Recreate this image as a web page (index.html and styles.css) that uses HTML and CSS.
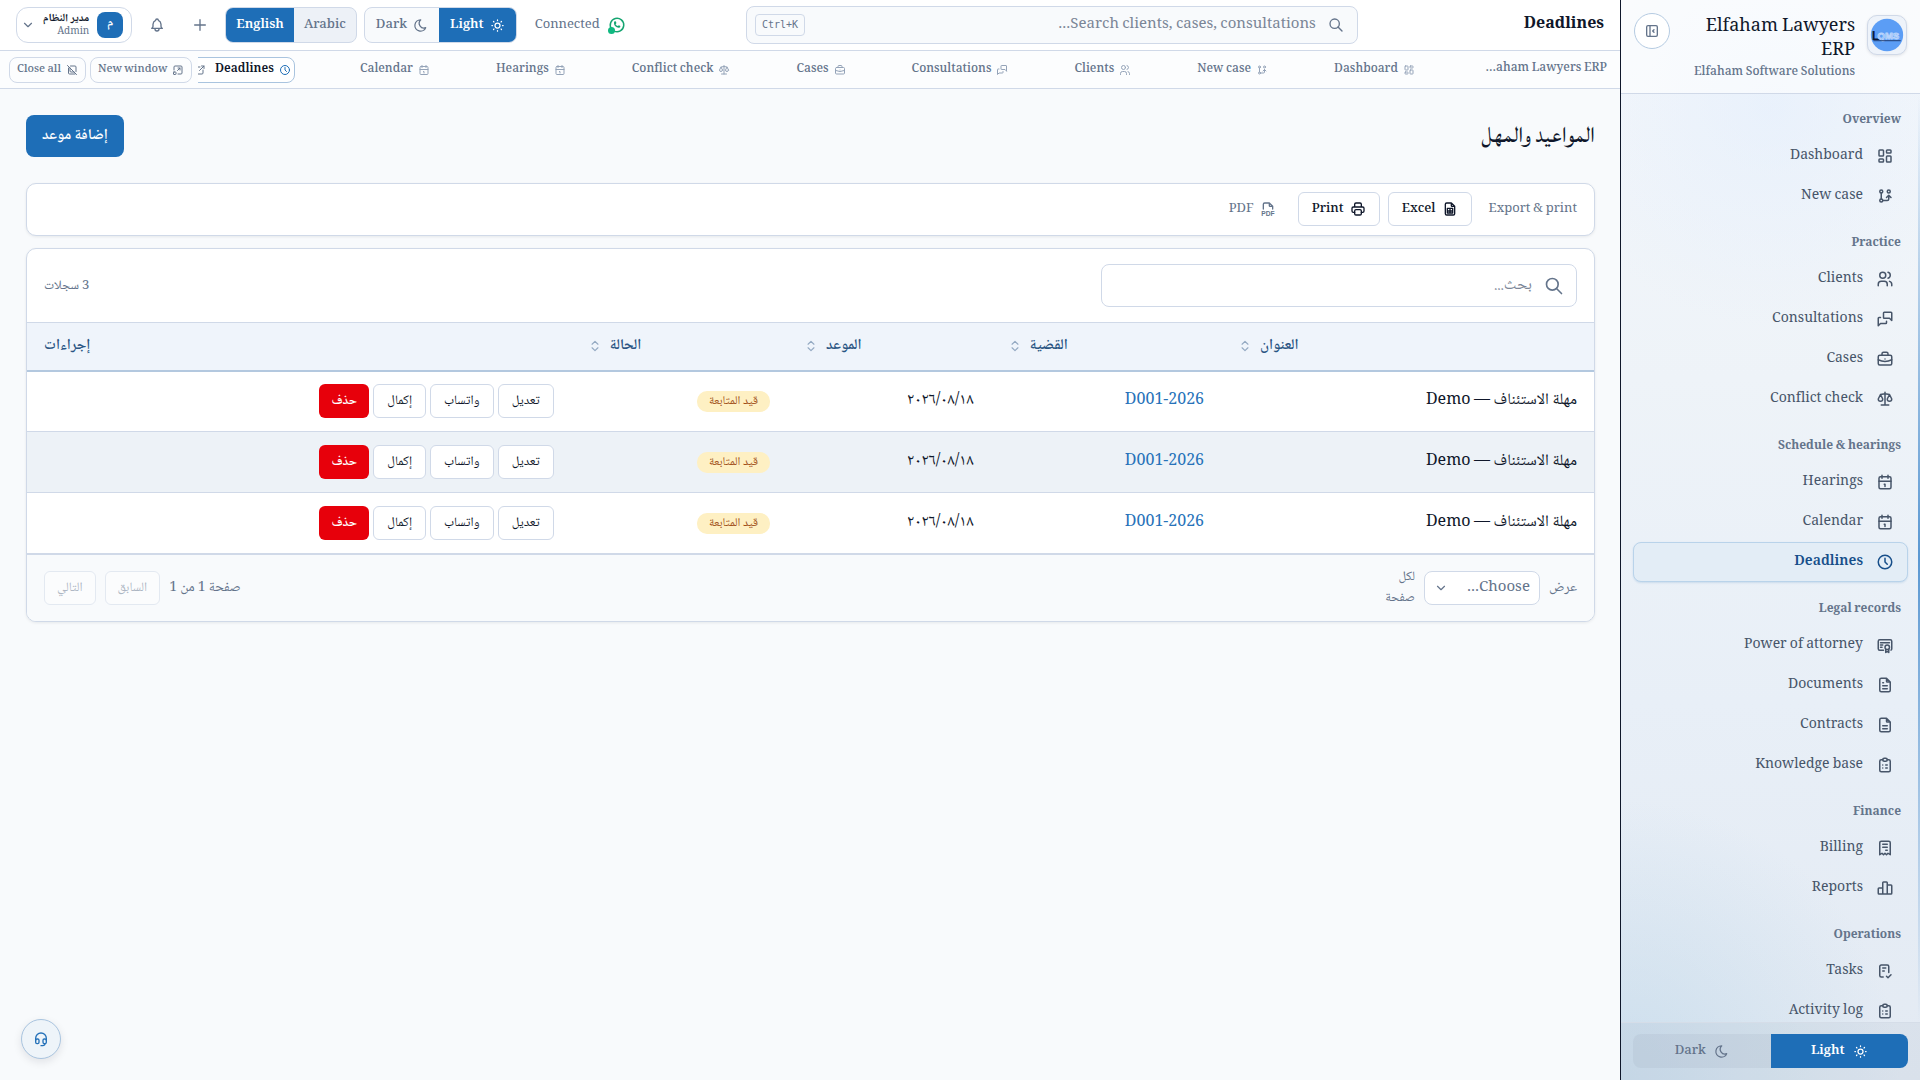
FILE: index.html
```
<!DOCTYPE html>
<html lang="ar" dir="rtl">
<head>
    <meta charset="UTF-8">
    <meta name="viewport" content="width=device-width, initial-scale=1.0">
    <title>Deadlines - Elfaham Lawyers ERP</title>
    <link rel="stylesheet" href="styles.css">
</head>
<body>
    <!-- Icon sprite -->
    <svg class="sprite" aria-hidden="true">
        <symbol id="i-search" viewBox="0 0 24 24"><circle cx="10" cy="10" r="7"/><path d="M21 21l-6-6"/></symbol>
        <symbol id="i-bell" viewBox="0 0 24 24"><path d="M10 5a2 2 0 1 1 4 0a7 7 0 0 1 4 6v3a4 4 0 0 0 2 3h-16a4 4 0 0 0 2-3v-3a7 7 0 0 1 4-6M9 17v1a3 3 0 0 0 6 0v-1"/></symbol>
        <symbol id="i-plus" viewBox="0 0 24 24"><path d="M12 4v16M4 12h16"/></symbol>
        <symbol id="i-chevron" viewBox="0 0 24 24"><path d="M6 9l6 6l6-6"/></symbol>
        <symbol id="i-moon" viewBox="0 0 24 24"><path d="M12 3h.393a7.5 7.5 0 0 0 7.92 12.446a9 9 0 1 1-8.313-12.454z"/></symbol>
        <symbol id="i-sun" viewBox="0 0 24 24"><circle cx="12" cy="12" r="4"/><path d="M3 12h1m8-9v1m8 8h1m-9 8v1m-6.4-15.4l.7.7m12.1-.7l-.7.7m0 11.4l.7.7m-12.1-.7l-.7.7"/></symbol>
        <symbol id="i-dashboard" viewBox="0 0 24 24"><rect x="4" y="4" width="6" height="8" rx="1"/><rect x="4" y="16" width="6" height="4" rx="1"/><rect x="14" y="12" width="6" height="8" rx="1"/><rect x="14" y="4" width="6" height="4" rx="1"/></symbol>
        <symbol id="i-branch" viewBox="0 0 24 24"><circle cx="7" cy="18" r="2"/><circle cx="7" cy="6" r="2"/><circle cx="17" cy="6" r="2"/><path d="M7 8v8M9 18h6a2 2 0 0 0 2-2v-5M14 14l3-3l3 3"/></symbol>
        <symbol id="i-users" viewBox="0 0 24 24"><circle cx="9" cy="7" r="4"/><path d="M3 21v-2a4 4 0 0 1 4-4h4a4 4 0 0 1 4 4v2M16 3.13a4 4 0 0 1 0 7.75M21 21v-2a4 4 0 0 0-3-3.85"/></symbol>
        <symbol id="i-messages" viewBox="0 0 24 24"><path d="M21 14l-3-3h-7a1 1 0 0 1-1-1v-6a1 1 0 0 1 1-1h9a1 1 0 0 1 1 1v10M14 15v2a1 1 0 0 1-1 1h-7l-3 3v-10a1 1 0 0 1 1-1h2"/></symbol>
        <symbol id="i-briefcase" viewBox="0 0 24 24"><rect x="3" y="7" width="18" height="13" rx="2"/><path d="M8 7v-2a2 2 0 0 1 2-2h4a2 2 0 0 1 2 2v2M12 12v.01M3 13a20 20 0 0 0 18 0"/></symbol>
        <symbol id="i-scale" viewBox="0 0 24 24"><path d="M7 20h10M6 6l6-1l6 1M12 3v17M9 12l-3-6l-3 6a3 3 0 0 0 6 0M21 12l-3-6l-3 6a3 3 0 0 0 6 0"/></symbol>
        <symbol id="i-calendar" viewBox="0 0 24 24"><rect x="4" y="5" width="16" height="16" rx="2"/><path d="M16 3v4M8 3v4M4 11h16M11 15h1v3"/></symbol>
        <symbol id="i-clock" viewBox="0 0 24 24"><circle cx="12" cy="12" r="9"/><path d="M12 7v5l3 3"/></symbol>
        <symbol id="i-certificate" viewBox="0 0 24 24"><circle cx="15" cy="15" r="3"/><path d="M13 17.5v4.5l2-1.5l2 1.5v-4.5M10 19h-5a2 2 0 0 1-2-2v-10a2 2 0 0 1 2-2h14a2 2 0 0 1 2 2v10a2 2 0 0 1-1 1.73M6 9h12M6 12h3M6 15h2"/></symbol>
        <symbol id="i-file" viewBox="0 0 24 24"><path d="M14 3v4a1 1 0 0 0 1 1h4M17 21h-10a2 2 0 0 1-2-2v-14a2 2 0 0 1 2-2h7l5 5v11a2 2 0 0 1-2 2zM9 9h1M9 13h6M9 17h6"/></symbol>
        <symbol id="i-contract" viewBox="0 0 24 24"><path d="M14 3v4a1 1 0 0 0 1 1h4M17 21h-10a2 2 0 0 1-2-2v-14a2 2 0 0 1 2-2h7l5 5v11a2 2 0 0 1-2 2zM9 13h6M9 17h6"/></symbol>
        <symbol id="i-clipboard" viewBox="0 0 24 24"><path d="M9 5h-2a2 2 0 0 0-2 2v12a2 2 0 0 0 2 2h10a2 2 0 0 0 2-2v-12a2 2 0 0 0-2-2h-2M9 12h.01M13 12h2M9 16h.01M13 16h2"/><rect x="9" y="3" width="6" height="4" rx="2"/></symbol>
        <symbol id="i-receipt" viewBox="0 0 24 24"><path d="M5 21v-16a2 2 0 0 1 2-2h10a2 2 0 0 1 2 2v16l-3-2l-2 2l-2-2l-2 2l-2-2l-3 2M9 7h6M9 11h6M13 15h2"/></symbol>
        <symbol id="i-chart" viewBox="0 0 24 24"><path d="M3 13a1 1 0 0 1 1-1h4a1 1 0 0 1 1 1v7h-5a1 1 0 0 1-1-1zM15 9a1 1 0 0 1 1-1h4a1 1 0 0 1 1 1v10a1 1 0 0 1-1 1h-5zM9 5a1 1 0 0 1 1-1h4a1 1 0 0 1 1 1v15h-6zM4 20h14"/></symbol>
        <symbol id="i-tasks" viewBox="0 0 24 24"><path d="M9.6 20h-2.6a2 2 0 0 1-2-2v-12a2 2 0 0 1 2-2h8a2 2 0 0 1 2 2v8M14 19l2 2l4-4M9 8h4M9 12h2"/></symbol>
        <symbol id="i-printer" viewBox="0 0 24 24"><path d="M17 17h2a2 2 0 0 0 2-2v-4a2 2 0 0 0-2-2h-14a2 2 0 0 0-2 2v4a2 2 0 0 0 2 2h2M17 9v-4a2 2 0 0 0-2-2h-6a2 2 0 0 0-2 2v4"/><rect x="7" y="13" width="10" height="8" rx="2"/></symbol>
        <symbol id="i-sheet" viewBox="0 0 24 24"><path d="M14 3v4a1 1 0 0 0 1 1h4M17 21h-10a2 2 0 0 1-2-2v-14a2 2 0 0 1 2-2h7l5 5v11a2 2 0 0 1-2 2zM8 11h8v7h-8zM8 15h8M12 11v7"/></symbol>
        <symbol id="i-pdf" viewBox="0 0 24 24"><path d="M14 3v4a1 1 0 0 0 1 1h4M5 12v-7a2 2 0 0 1 2-2h7l5 5v4"/><text class="pdf-mark" x="12" y="22">PDF</text></symbol>
        <symbol id="i-headset" viewBox="0 0 24 24"><path d="M4 14v-3a8 8 0 1 1 16 0v3M18 19c0 1.657-2.686 3-6 3"/><rect x="4" y="12" width="5" height="7" rx="2"/><rect x="15" y="12" width="5" height="7" rx="2"/></symbol>
        <symbol id="i-collapse" viewBox="0 0 24 24"><rect x="4" y="4" width="16" height="16" rx="2"/><path d="M9 4v16M15 10l-2 2l2 2"/></symbol>
        <symbol id="i-sort" viewBox="0 0 24 24"><path d="M7 9l5-5l5 5M17 15l-5 5l-5-5"/></symbol>
        <symbol id="i-external" viewBox="0 0 24 24"><path d="M12 6h-6a2 2 0 0 0-2 2v10a2 2 0 0 0 2 2h10a2 2 0 0 0 2-2v-6M11 13l9-9M15 4h5v5"/></symbol>
        <symbol id="i-window" viewBox="0 0 24 24"><rect x="3" y="16" width="5" height="5" rx="1"/><path d="M4 12v-6a2 2 0 0 1 2-2h12a2 2 0 0 1 2 2v12a2 2 0 0 1-2 2h-6M12 8h4v4M16 8l-5 5"/></symbol>
        <symbol id="i-close-all" viewBox="0 0 24 24"><path d="M9 4h9a2 2 0 0 1 2 2v9M16 16h-6a2 2 0 0 1-2-2v-6M5 8v10a2 2 0 0 0 2 2h11M3 3l18 18"/></symbol>
        <symbol id="i-whatsapp" viewBox="0 0 24 24"><path d="M3 21l1.65-3.8a9 9 0 1 1 3.4 2.9l-5.05.9M9 9.500a.5.5 0 0 0 1 0v-1a.5.5 0 0 0-1 0v1a5 5 0 0 0 5 5h1a.5.5 0 0 0 0-1h-1a.5.5 0 0 0 0 1"/></symbol>
    </svg>

    <aside class="sidebar">
        <div class="brand">
            <svg class="brand-logo" viewBox="0 0 40 40" aria-label="LQMS">
                <circle cx="20" cy="20" r="17"/>
                <text class="logo-dark" x="4" y="25">L</text>
                <text class="logo-light" x="10" y="24">QMS</text>
                <path d="M6 26h28"/>
            </svg>
            <div class="brand-text">
                <div class="brand-name">Elfaham Lawyers ERP</div>
                <div class="brand-sub">Elfaham Software Solutions</div>
            </div>
            <button class="collapse-btn" title="Collapse sidebar"><svg><use href="#i-collapse"/></svg></button>
        </div>

        <nav class="side-nav">
            <h2>Overview</h2>
            <a href="#"><svg><use href="#i-dashboard"/></svg>Dashboard</a>
            <a href="#"><svg><use href="#i-branch"/></svg>New case</a>
            <h2>Practice</h2>
            <a href="#"><svg><use href="#i-users"/></svg>Clients</a>
            <a href="#"><svg><use href="#i-messages"/></svg>Consultations</a>
            <a href="#"><svg><use href="#i-briefcase"/></svg>Cases</a>
            <a href="#"><svg><use href="#i-scale"/></svg>Conflict check</a>
            <h2>Schedule &amp; hearings</h2>
            <a href="#"><svg><use href="#i-calendar"/></svg>Hearings</a>
            <a href="#"><svg><use href="#i-calendar"/></svg>Calendar</a>
            <a href="#" class="active"><svg><use href="#i-clock"/></svg>Deadlines</a>
            <h2>Legal records</h2>
            <a href="#"><svg><use href="#i-certificate"/></svg>Power of attorney</a>
            <a href="#"><svg><use href="#i-file"/></svg>Documents</a>
            <a href="#"><svg><use href="#i-contract"/></svg>Contracts</a>
            <a href="#"><svg><use href="#i-clipboard"/></svg>Knowledge base</a>
            <h2>Finance</h2>
            <a href="#"><svg><use href="#i-receipt"/></svg>Billing</a>
            <a href="#"><svg><use href="#i-chart"/></svg>Reports</a>
            <h2>Operations</h2>
            <a href="#"><svg><use href="#i-tasks"/></svg>Tasks</a>
            <a href="#"><svg><use href="#i-clipboard"/></svg>Activity log</a>
        </nav>

        <div class="side-footer">
            <button class="on">Light<svg><use href="#i-sun"/></svg></button>
            <button>Dark<svg><use href="#i-moon"/></svg></button>
        </div>
    </aside>

    <div class="main">
        <header class="topbar">
            <h1>Deadlines</h1>
            <label class="global-search">
                <svg><use href="#i-search"/></svg>
                <input type="text" placeholder="Search clients, cases, consultations..." aria-label="Search">
                <kbd>Ctrl+K</kbd>
            </label>
            <div class="top-actions">
                <div class="status">
                    <span class="status-icon"><svg><use href="#i-whatsapp"/></svg></span>
                    Connected
                </div>
                <div class="toggle">
                    <button class="on">Light<svg><use href="#i-sun"/></svg></button>
                    <button>Dark<svg><use href="#i-moon"/></svg></button>
                </div>
                <div class="toggle toggle-lang">
                    <button>Arabic</button>
                    <button class="on">English</button>
                </div>
                <button class="icon-btn" title="Add"><svg><use href="#i-plus"/></svg></button>
                <button class="icon-btn" title="Notifications"><svg><use href="#i-bell"/></svg></button>
                <button class="user">
                    <span class="avatar">م</span>
                    <span class="user-text"><strong>مدير النظام</strong><small>Admin</small></span>
                    <svg><use href="#i-chevron"/></svg>
                </button>
            </div>
        </header>

        <div class="tabbar">
            <div class="tabs">
                <a href="#" class="tab-home">Elfaham Lawyers ERP</a>
                <a href="#"><svg><use href="#i-dashboard"/></svg>Dashboard</a>
                <a href="#"><svg><use href="#i-branch"/></svg>New case</a>
                <a href="#"><svg><use href="#i-users"/></svg>Clients</a>
                <a href="#"><svg><use href="#i-messages"/></svg>Consultations</a>
                <a href="#"><svg><use href="#i-briefcase"/></svg>Cases</a>
                <a href="#"><svg><use href="#i-scale"/></svg>Conflict check</a>
                <a href="#"><svg><use href="#i-calendar"/></svg>Hearings</a>
                <a href="#"><svg><use href="#i-calendar"/></svg>Calendar</a>
                <a href="#" class="active"><svg><use href="#i-clock"/></svg>Deadlines<svg class="tab-open"><use href="#i-external"/></svg></a>
            </div>
            <button class="tab-btn"><svg><use href="#i-window"/></svg>New window</button>
            <button class="tab-btn"><svg><use href="#i-close-all"/></svg>Close all</button>
        </div>

        <main class="page">
            <div class="page-head">
                <h2>المواعيد والمهل</h2>
                <button class="primary">إضافة موعد</button>
            </div>

            <section class="export">
                <span>Export &amp; print</span>
                <button class="btn"><svg><use href="#i-sheet"/></svg>Excel</button>
                <button class="btn"><svg><use href="#i-printer"/></svg>Print</button>
                <button class="btn btn-plain"><svg><use href="#i-pdf"/></svg>PDF</button>
            </section>

            <section class="card">
                <div class="card-head">
                    <label class="table-search">
                        <svg><use href="#i-search"/></svg>
                        <input type="text" placeholder="بحث..." aria-label="بحث">
                    </label>
                    <span class="count">3 سجلات</span>
                </div>
                <table>
                    <thead>
                        <tr>
                            <th class="col-title"><button>العنوان<svg><use href="#i-sort"/></svg></button></th>
                            <th class="col-case"><button>القضية<svg><use href="#i-sort"/></svg></button></th>
                            <th class="col-date"><button>الموعد<svg><use href="#i-sort"/></svg></button></th>
                            <th class="col-state"><button>الحالة<svg><use href="#i-sort"/></svg></button></th>
                            <th>إجراءات</th>
                        </tr>
                    </thead>
                    <tbody>
                        <tr>
                            <td>مهلة الاستئناف — Demo</td>
                            <td><a href="#">D001-2026</a></td>
                            <td>٢٠٢٦/٠٨/١٨</td>
                            <td><span class="badge">قيد المتابعة</span></td>
                            <td><div class="row-actions"><button>تعديل</button><button>واتساب</button><button>إكمال</button><button class="danger">حذف</button></div></td>
                        </tr>
                        <tr>
                            <td>مهلة الاستئناف — Demo</td>
                            <td><a href="#">D001-2026</a></td>
                            <td>٢٠٢٦/٠٨/١٨</td>
                            <td><span class="badge">قيد المتابعة</span></td>
                            <td><div class="row-actions"><button>تعديل</button><button>واتساب</button><button>إكمال</button><button class="danger">حذف</button></div></td>
                        </tr>
                        <tr>
                            <td>مهلة الاستئناف — Demo</td>
                            <td><a href="#">D001-2026</a></td>
                            <td>٢٠٢٦/٠٨/١٨</td>
                            <td><span class="badge">قيد المتابعة</span></td>
                            <td><div class="row-actions"><button>تعديل</button><button>واتساب</button><button>إكمال</button><button class="danger">حذف</button></div></td>
                        </tr>
                    </tbody>
                </table>
                <div class="card-foot">
                    <label for="per-page">عرض</label>
                    <span class="select">
                        <select id="per-page"><option>Choose...</option></select>
                        <svg><use href="#i-chevron"/></svg>
                    </span>
                    <span class="per-page">لكل صفحة</span>
                    <div class="pager">
                        <span>صفحة 1 من 1</span>
                        <button disabled>السابق</button>
                        <button disabled>التالي</button>
                    </div>
                </div>
            </section>
        </main>

        <button class="support" title="Support"><svg><use href="#i-headset"/></svg></button>
    </div>
</body>
</html>
```
FILE: styles.css
```
/* General Reset */
* {
    margin: 0;
    padding: 0;
    box-sizing: border-box;
}

:root {
    --blue: #1e6eb7;
    --border: #d0d9e8;
    --muted: #64748b;
    --ink: #0f172a;
}

body {
    font-family: "Noto Naskh Arabic", "Noto Serif", "Noto Sans", serif;
    font-size: 14px;
    line-height: 24px;
    display: flex;
    height: 100vh;
    overflow: hidden;
    background-color: #f8fafc;
    color: var(--ink);
}

button, input, select {
    font: inherit;
    color: inherit;
    background: none;
    border: none;
    outline: none;
}

button {
    cursor: pointer;
}

a {
    color: inherit;
    text-decoration: none;
}

svg {
    width: 16px;
    height: 16px;
    flex: none;
    fill: none;
    stroke: currentColor;
    stroke-width: 2;
    stroke-linecap: round;
    stroke-linejoin: round;
}

.sprite {
    display: none;
}

.pdf-mark {
    font: bold 10px "Liberation Sans", sans-serif;
    text-anchor: middle;
    fill: currentColor;
    stroke: none;
}

/* Sidebar */
.sidebar {
    width: 300px;
    flex: none;
    display: flex;
    flex-direction: column;
    position: relative;
    border-left: 1px solid #0f172a;
    background:
        radial-gradient(circle at 50% 10%, rgba(219, 234, 254, .4), transparent 220px),
        radial-gradient(circle at 0 100%, rgba(180, 210, 230, .5), transparent 280px),
        linear-gradient(#f4f7fb, #eef3f8 35%, #e8eff7 65%, #e3eaf3);
}

.sidebar::after {
    content: "";
    position: absolute;
    top: 94px;
    bottom: 58px;
    right: 0;
    width: 2px;
    background: linear-gradient(transparent, #5b98d2 50%, transparent);
}

.brand {
    display: flex;
    align-items: flex-start;
    gap: 12px;
    height: 94px;
    padding: 13px 13px 0;
    background-color: rgba(255, 255, 255, .6);
    border-bottom: 1px solid var(--border);
}

.brand-logo {
    width: 40px;
    height: 40px;
    margin-top: 2px;
    border: 1px solid var(--border);
    border-radius: 10px;
    background-color: #eef3fa;
    box-shadow: 0 1px 3px rgba(15, 23, 42, .1);
    stroke: none;
}

.brand-logo circle {
    fill: #5b9df5;
}

.brand-logo path {
    stroke: #1e3a6e;
    stroke-width: 1;
}

.brand-logo text {
    direction: ltr;
    font: bold 10px "Liberation Sans", sans-serif;
}

.brand-logo .logo-dark {
    font-size: 14px;
    fill: #0b1a3a;
}

.logo-light {
    fill: #5b9df5;
    stroke: #b7d3fb;
    stroke-width: 1;
}

.brand-text {
    flex: 1;
    padding-top: 2px;
}

.brand-name {
    font-size: 18px;
}

.brand-sub {
    font-size: 12px;
    line-height: 20px;
    font-weight: 500;
    color: var(--muted);
}

.collapse-btn {
    display: grid;
    place-items: center;
    width: 36px;
    height: 36px;
    flex: none;
    border: 1px solid #b5cbe2;
    border-radius: 50%;
    background-color: #fff;
    color: var(--muted);
}

.side-nav {
    flex: 1;
    overflow: hidden;
    padding: 6px 12px 0;
}

.side-nav h2 {
    height: 43px;
    padding: 16px 7px 0;
    font-size: 12px;
    line-height: 24px;
    font-weight: 700;
    color: var(--muted);
}

.side-nav h2:first-child {
    height: 36px;
    padding-top: 9px;
}

.side-nav a {
    display: flex;
    align-items: center;
    gap: 13px;
    height: 40px;
    padding: 0 13px;
    border: 1px solid transparent;
    border-radius: 8px;
    color: #475569;
}

.side-nav svg {
    width: 18px;
    height: 18px;
}

.side-nav .active {
    border-color: #b9d3ea;
    background-color: #e3edf6;
    color: #174f8a;
    font-weight: 600;
    box-shadow: 0 1px 2px rgba(30, 110, 183, .15);
}

.side-footer {
    display: flex;
    padding: 11px 12px 12px;
    border-top: 1px solid #d5dde8;
    background-color: rgba(148, 163, 184, .12);
}

.side-footer button {
    flex: 1;
    display: flex;
    align-items: center;
    justify-content: center;
    flex-direction: row-reverse;
    gap: 8px;
    height: 34px;
    background-color: rgba(148, 163, 184, .15);
    color: var(--muted);
    border-radius: 8px 0 0 8px;
    font-size: 13px;
    font-weight: 500;
}

.side-footer svg,
.toggle svg {
    width: 15px;
    height: 15px;
}

.side-footer .on,
.toggle .on {
    background-color: var(--blue);
    color: #fff;
    font-weight: 600;
}

.side-footer .on {
    border-radius: 0 8px 8px 0;
}

/* Top bar */
.main {
    flex: 1;
    min-width: 0;
}

.topbar {
    display: flex;
    align-items: center;
    height: 51px;
    padding: 0 16px;
    background-color: #fff;
    border-bottom: 1px solid var(--border);
}

.topbar h1 {
    min-width: 126px;
    font-size: 16px;
    font-weight: 700;
}

.global-search {
    flex: 0 1 612px;
    display: flex;
    align-items: center;
    gap: 12px;
    height: 38px;
    margin: 0 auto;
    padding: 0 13px 0 8px;
    border: 1px solid var(--border);
    border-radius: 8px;
    background-color: #f8fafc;
    color: var(--muted);
}

.global-search input {
    flex: 1;
    min-width: 0;
    font-size: 15px;
}

input::placeholder {
    color: #7b8697;
    opacity: 1;
}

kbd {
    padding: 0 6px;
    border: 1px solid var(--border);
    border-radius: 4px;
    font: 10px/20px "DejaVu Sans Mono", "Liberation Mono", monospace;
}

.top-actions {
    display: flex;
    align-items: center;
    gap: 7px;
}

.status {
    display: flex;
    align-items: center;
    gap: 8px;
    margin-left: 11px;
    font-size: 13px;
    color: var(--muted);
}

.status-icon {
    display: flex;
    position: relative;
    color: #16a571;
}

.status-icon svg {
    width: 18px;
    height: 18px;
}

.status-icon::after {
    content: "";
    position: absolute;
    left: 0;
    bottom: 0;
    width: 7px;
    height: 7px;
    border-radius: 50%;
    background-color: #10b981;
}

.toggle {
    display: flex;
    height: 36px;
    border: 1px solid var(--border);
    border-radius: 8px;
    background-color: #f8fafc;
    overflow: hidden;
}

.toggle button {
    display: flex;
    align-items: center;
    flex-direction: row-reverse;
    gap: 6px;
    padding: 0 11px;
    color: var(--muted);
    font-size: 13px;
    font-weight: 500;
}

.toggle-lang {
    background-color: #edf1f7;
}

.toggle-lang button {
    padding: 0 10px;
}

.icon-btn {
    display: grid;
    place-items: center;
    width: 36px;
    height: 36px;
    color: var(--muted);
}

.user {
    display: flex;
    align-items: center;
    gap: 8px;
    height: 36px;
    padding: 0 8px;
    border: 1px solid var(--border);
    border-radius: 12px;
    text-align: right;
}

.avatar {
    width: 26px;
    height: 26px;
    border-radius: 8px;
    background-color: var(--blue);
    color: #fff;
    font-size: 12px;
    font-weight: 700;
    text-align: center;
}

.user-text strong,
.user-text small {
    display: block;
    font-size: 11px;
    line-height: 14px;
}

.user-text small {
    font-size: 10px;
    line-height: 12px;
    color: var(--muted);
}

.user svg {
    width: 14px;
    height: 14px;
    margin-left: -4px;
    color: var(--muted);
}

/* Open tabs */
.tabbar {
    display: flex;
    align-items: center;
    gap: 4px;
    height: 38px;
    padding: 0 4px 0 9px;
    background-color: #fcfdfe;
    border-bottom: 1px solid var(--border);
    font-size: 12px;
    color: var(--muted);
}

.tabs {
    flex: 1;
    min-width: 0;
    display: flex;
    margin-left: 2px;
    overflow: hidden;
}

.tabs a {
    display: flex;
    align-items: center;
    flex: none;
    gap: 5px;
    height: 26px;
    padding: 0 8px 0 58px;
    font-weight: 500;
    white-space: nowrap;
}

.tabs .tab-home {
    display: block;
    width: 135px;
    margin-left: 58px;
    padding: 0 9px 0 0;
    overflow: hidden;
    text-overflow: ellipsis;
}

.tabs svg,
.tab-btn svg {
    width: 12px;
    height: 12px;
}

.tabs svg {
    color: #94a3b8;
}

.tabs .active {
    margin-right: 7px;
    padding: 0 3px 0 24px;
    border: 1px solid #a9c4df;
    border-radius: 8px;
    background-color: #fff;
    color: var(--ink);
    font-weight: 600;
}

.tabs .active svg {
    color: var(--blue);
}

.tabs .active .tab-open {
    margin-right: 4px;
    color: var(--muted);
}

.tab-btn {
    display: flex;
    align-items: center;
    gap: 5px;
    height: 26px;
    padding: 0 7px;
    border: 1px solid var(--border);
    border-radius: 8px;
    font-size: 11px;
    line-height: 20px;
    font-weight: 500;
}

/* Page */
.page {
    padding: 26px 25px 26px 26px;
}

.page-head {
    display: flex;
    align-items: center;
    justify-content: space-between;
    margin-bottom: 26px;
}

.page-head h2 {
    font-family: "Lateef", "Noto Naskh Arabic", serif;
    font-size: 29px;
    line-height: 42px;
    font-weight: 400;
}

.primary {
    height: 42px;
    padding: 0 16px;
    border-radius: 8px;
    background-color: var(--blue);
    color: #fff;
    font-size: 15px;
    font-weight: 600;
}

.export,
.card {
    border: 1px solid var(--border);
    border-radius: 10px;
    background-color: #fff;
    box-shadow: 0 1px 3px rgba(15, 23, 42, .08);
}

.export {
    display: flex;
    align-items: center;
    gap: 8px;
    margin-bottom: 12px;
    padding: 8px 17px 9px;
    color: var(--muted);
    font-size: 13px;
}

.export span {
    margin-left: 9px;
}

.btn {
    display: flex;
    align-items: center;
    gap: 6px;
    height: 34px;
    padding: 0 13px;
    border: 1px solid var(--border);
    border-radius: 6px;
    color: var(--ink);
    font-weight: 500;
}

.btn-plain {
    border-color: transparent;
    color: var(--muted);
    font-weight: 400;
}

/* Records table */
.card {
    overflow: hidden;
}

.card-head {
    display: flex;
    align-items: center;
    justify-content: space-between;
    padding: 15px 17px;
}

.table-search {
    display: flex;
    align-items: center;
    gap: 12px;
    width: 476px;
    height: 43px;
    padding: 0 12px;
    border: 1px solid var(--border);
    border-radius: 8px;
    color: var(--muted);
}

.table-search svg {
    width: 20px;
    height: 20px;
}

.table-search input {
    flex: 1;
    font-size: 16px;
}

.count,
.card-foot {
    font-size: 13px;
    color: var(--muted);
}

table {
    width: 100%;
    border-collapse: collapse;
}

th {
    height: 48px;
    padding: 0 17px;
    border-top: 1px solid var(--border);
    border-bottom: 2px solid #b3c8df;
    background-color: #eff4fb;
    color: #2a5583;
    font-size: 15px;
    font-weight: 600;
    text-align: left;
}

.col-title {
    width: 23.8%;
}

.col-case {
    width: 14.7%;
}

.col-date {
    width: 13%;
}

.col-state {
    width: 13.8%;
}

th button {
    display: inline-flex;
    align-items: center;
    gap: 8px;
}

th svg {
    width: 14px;
    height: 14px;
    color: #94a9c2;
}

td {
    height: 61px;
    padding: 0 17px;
    border-bottom: 1px solid var(--border);
    font-size: 16px;
}

tbody tr:nth-child(even) {
    background-color: #edf2f7;
}

td a {
    color: #2672b9;
}

.badge {
    display: inline-block;
    padding: 0 12px;
    border-radius: 10px;
    background-color: #fef0c3;
    color: #a1501a;
    font-size: 12px;
    line-height: 21px;
}

.row-actions {
    display: flex;
    gap: 4px;
}

.row-actions button,
.pager button {
    height: 34px;
    padding: 0 13px;
    border: 1px solid var(--border);
    border-radius: 6px;
    background-color: #fff;
    font-size: 13px;
}

.row-actions .danger {
    padding: 0 12px;
    border: none;
    background-color: #e7000b;
    color: #fff;
    font-weight: 600;
}

.card-foot {
    display: flex;
    align-items: center;
    gap: 9px;
    padding: 12px 17px;
    border-top: 1px solid var(--border);
    background-color: #f8fafc;
}

.card-foot label {
    font-size: 14px;
}

.select {
    display: grid;
    align-items: center;
}

.select select,
.select svg {
    grid-area: 1 / 1;
}

.select select {
    appearance: none;
    width: 116px;
    height: 34px;
    padding: 0 9px;
    border: 1px solid var(--border);
    border-radius: 8px;
    background-color: #fff;
    font-size: 15px;
}

.select svg {
    width: 14px;
    height: 14px;
    margin-left: 10px;
    justify-self: end;
    pointer-events: none;
}

.per-page {
    width: 36px;
    line-height: 21px;
}

.pager {
    display: flex;
    align-items: center;
    gap: 9px;
    margin-right: auto;
}

.pager span {
    font-size: 14px;
}

.pager button {
    padding: 0 12px;
}

.pager button:disabled {
    opacity: .5;
}

/* Floating help button */
.support {
    position: absolute;
    left: 21px;
    bottom: 21px;
    display: grid;
    place-items: center;
    width: 40px;
    height: 40px;
    border: 1px solid #a9c4df;
    border-radius: 50%;
    background-color: #eef4f9;
    color: #2672b9;
    box-shadow: 0 3px 8px rgba(15, 23, 42, .1);
}
```
